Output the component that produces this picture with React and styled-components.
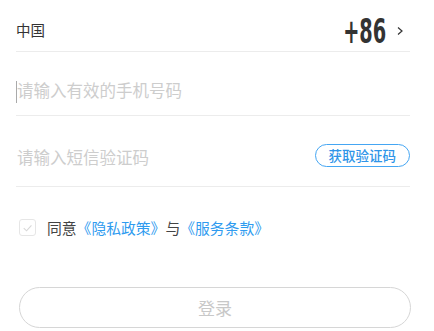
import React from "react";
import styled, { createGlobalStyle } from "styled-components";

const GlobalStyle = createGlobalStyle`
  body {
    margin: 0;
    background: #fff;
    font-family: "Noto Sans CJK SC", "Noto Sans", sans-serif;
  }
`;

export default function App() {
  return (
    <Page>
      <GlobalStyle />
      <Field $height={51}>
        <Country>中国</Country>
        <CodeWrap>
          <Code>+86</Code>
          <Chevron viewBox="0 0 8 10" width="8" height="10">
            <path d="M2 1.5 L6 5 L2 8.5" fill="none" stroke="#333" strokeWidth="1.2" />
          </Chevron>
        </CodeWrap>
      </Field>
      <Field $height={63}>
        <Cursor />
        <Placeholder>请输入有效的手机号码</Placeholder>
      </Field>
      <Field $height={70}>
        <Placeholder>请输入短信验证码</Placeholder>
        <CodeButton>获取验证码</CodeButton>
      </Field>
      <Agreement>
        <CheckBox>
          <svg viewBox="0 0 16 16" width="16" height="16">
            <path d="M4 8.2 L7 11 L12.2 5.2" fill="none" stroke="#d8d8d8" strokeWidth="1.2" />
          </svg>
        </CheckBox>
        <AgreeText>同意</AgreeText>
        <LinkText>《隐私政策》</LinkText>
        <AgreeText>与</AgreeText>
        <LinkText>《服务条款》</LinkText>
      </Agreement>
      <LoginButton>登录</LoginButton>
    </Page>
  );
}

const Page = styled.div`
  width: 434px;
  height: 331px;
  box-sizing: border-box;
  padding: 0 24px 0 16px;
  overflow: hidden;
`;

const Field = styled.div`
  display: flex;
  align-items: center;
  justify-content: space-between;
  height: ${(p) => p.$height}px;
  border-bottom: 1px solid #ececec;
  position: relative;
`;

const Country = styled.span`
  font-size: 14.5px;
  color: #333;
  padding-top: 8px;
`;

const CodeWrap = styled.div`
  display: flex;
  align-items: center;
  gap: 10px;
  padding-top: 12px;
  margin-right: 6px;
`;

const Code = styled.span`
  font-family: "DejaVu Sans Condensed", "Liberation Sans Narrow", sans-serif;
  font-weight: 700;
  font-size: 33px;
  color: #333;
  transform: scaleX(0.65);
  transform-origin: right center;
  margin-left: -22px;
  line-height: 1;
`;

const Chevron = styled.svg`
  display: block;
  margin-top: -2px;
`;

const Cursor = styled.span`
  position: absolute;
  left: 0;
  top: 29px;
  width: 1px;
  height: 22px;
  background: #aaa;
`;

const Placeholder = styled.span`
  font-size: 16.5px;
  color: #cdcdcd;
  padding-left: 1px;
  padding-top: 12px;
`;

const CodeButton = styled.button`
  height: 23px;
  padding: 0 13px;
  border: 1.5px solid #45a6f3;
  border-radius: 12px;
  background: #fff;
  color: #2f95e8;
  font-family: "Noto Sans CJK SC", sans-serif;
  font-size: 13.5px;
  font-weight: 500;
  line-height: 20px;
  margin-top: 8px;
`;

const Agreement = styled.div`
  display: flex;
  align-items: center;
  padding: 32px 0 0 3px;
  height: 17px;
`;

const CheckBox = styled.span`
  width: 15px;
  height: 15px;
  border: 1px solid #e6e6e6;
  border-radius: 3px;
  display: flex;
  align-items: center;
  justify-content: center;
  margin-right: 11px;
  svg {
    display: block;
  }
`;

const AgreeText = styled.span`
  font-size: 14.8px;
  color: #444;
`;

const LinkText = styled.span`
  font-size: 14.8px;
  color: #2f9bef;
`;

const LoginButton = styled.button`
  display: block;
  width: 392px;
  height: 41px;
  margin: 51px 0 0 3px;
  border: 1.5px solid #d6d6d6;
  border-radius: 21px;
  background: #fff;
  color: #c8c8c8;
  font-family: "Noto Sans CJK SC", sans-serif;
  font-size: 17px;
`;
